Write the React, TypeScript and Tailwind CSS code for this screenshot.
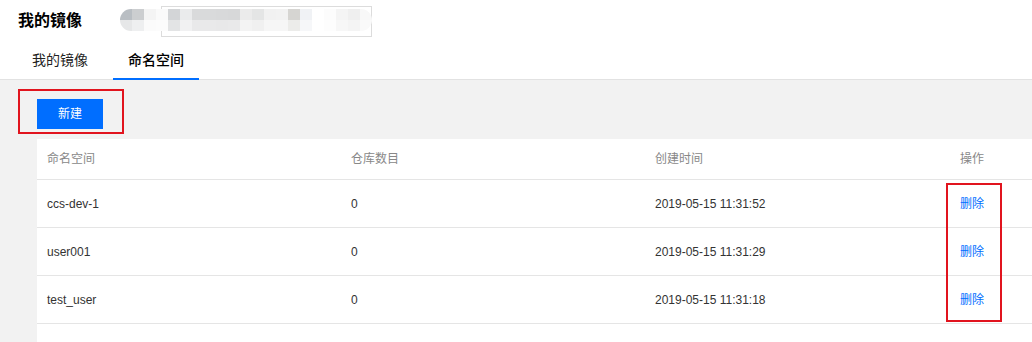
import React from "react";

const row1 = ["#b9bec3","#ccced0","#f4f4f4","#fafafa","#d3d5d7","#eaebec","#d9dadb","#d9dadb","#d8d9da","#d7d8d9","#ebebeb","#e4e5e5","#f1f1f1","#f2f2f2","#d6d5d2","#f0f2f5","#ffffff","#fcfcfc","#f4f4f4","#efefef","#f8f8f8"];
const row2 = ["#e6e7e8","#eeeff0","#fbfbfb","#fcfcfc","#e3e4e5","#f1f1f2","#e9e9ea","#e9e9ea","#e8e8e9","#e9e9ea","#f3f3f3","#f0f0f0","#f6f6f6","#f6f6f6","#ececea","#f6f7f9","#ffffff","#fdfdfd","#f7f7f7","#f4f4f4","#fafafa"];

const rows = [
  { name: "ccs-dev-1", count: "0", time: "2019-05-15 11:31:52" },
  { name: "user001", count: "0", time: "2019-05-15 11:31:29" },
  { name: "test_user", count: "0", time: "2019-05-15 11:31:18" },
];

const font = { fontFamily: '"Liberation Sans", Arial, "Noto Sans CJK SC", sans-serif' };

export default function App() {
  return (
    <div className="w-[1032px] h-[342px] overflow-hidden bg-[#f2f2f2]" style={font}>
      {/* header */}
      <div className="bg-white border-b border-[#e2e2e2]">
        <div className="h-[42px] flex items-center pl-[18px]">
          <div className="text-[16px] font-bold text-black leading-none">我的镜像</div>
          <div className="relative ml-[38px] h-[32px] w-[258px] flex items-center">
            <div className="ml-[41px] w-[211px] h-[31px] border border-[#dcdcdc]" />
            <div className="absolute left-0 top-[4px] flex flex-col blur-[0.6px] rounded-full overflow-hidden">
              <div className="flex">
                {row1.map((c, i) => (
                  <div key={i} className="w-[12px] h-[11px]" style={{ backgroundColor: c }} />
                ))}
              </div>
              <div className="flex">
                {row2.map((c, i) => (
                  <div key={i} className="w-[12px] h-[11px]" style={{ backgroundColor: c }} />
                ))}
              </div>
            </div>
          </div>
        </div>
        <div className="h-[37px] flex items-stretch pl-[18px] text-[14px]">
          <div className="px-[14px] flex items-center text-[#222]">我的镜像</div>
          <div className="ml-[11px] px-[15px] flex items-center text-black font-medium border-b-2 border-[#006eff] -mb-px">
            命名空间
          </div>
        </div>
      </div>

      {/* content */}
      <div className="pt-[9px]">
        <div className="ml-[18px] w-[106px] border-2 border-[#e1141e] pl-[17px] pt-[8px] pb-[3px]">
          <button className="w-[66px] h-[30px] bg-[#006eff] text-white text-[12px] flex items-center justify-center">
            新建
          </button>
        </div>

        <div className="mt-[5px] ml-[37px] bg-white h-[210px] text-[12px]">
          <div className="grid grid-cols-[304px_304px_305px_1fr] h-[41px] items-center border-b border-[#e5e5e5] text-[#888]">
            <div className="pl-[10px]">命名空间</div>
            <div className="pl-[10px]">仓库数目</div>
            <div className="pl-[10px]">创建时间</div>
            <div className="pl-[10px]">操作</div>
          </div>
          <div className="relative">
            {rows.map((r) => (
              <div
                key={r.name}
                className="grid grid-cols-[304px_304px_305px_1fr] h-[48px] items-center border-b border-[#e5e5e5] text-[#333]"
              >
                <div className="pl-[10px]">{r.name}</div>
                <div className="pl-[10px]">{r.count}</div>
                <div className="pl-[10px]">{r.time}</div>
                <div className="pl-[10px] text-[#006eff]">删除</div>
              </div>
            ))}
            <div className="absolute left-[909px] top-[3px] w-[56px] h-[139px] border-2 border-[#e1141e] pointer-events-none" />
          </div>
        </div>
      </div>
    </div>
  );
}
